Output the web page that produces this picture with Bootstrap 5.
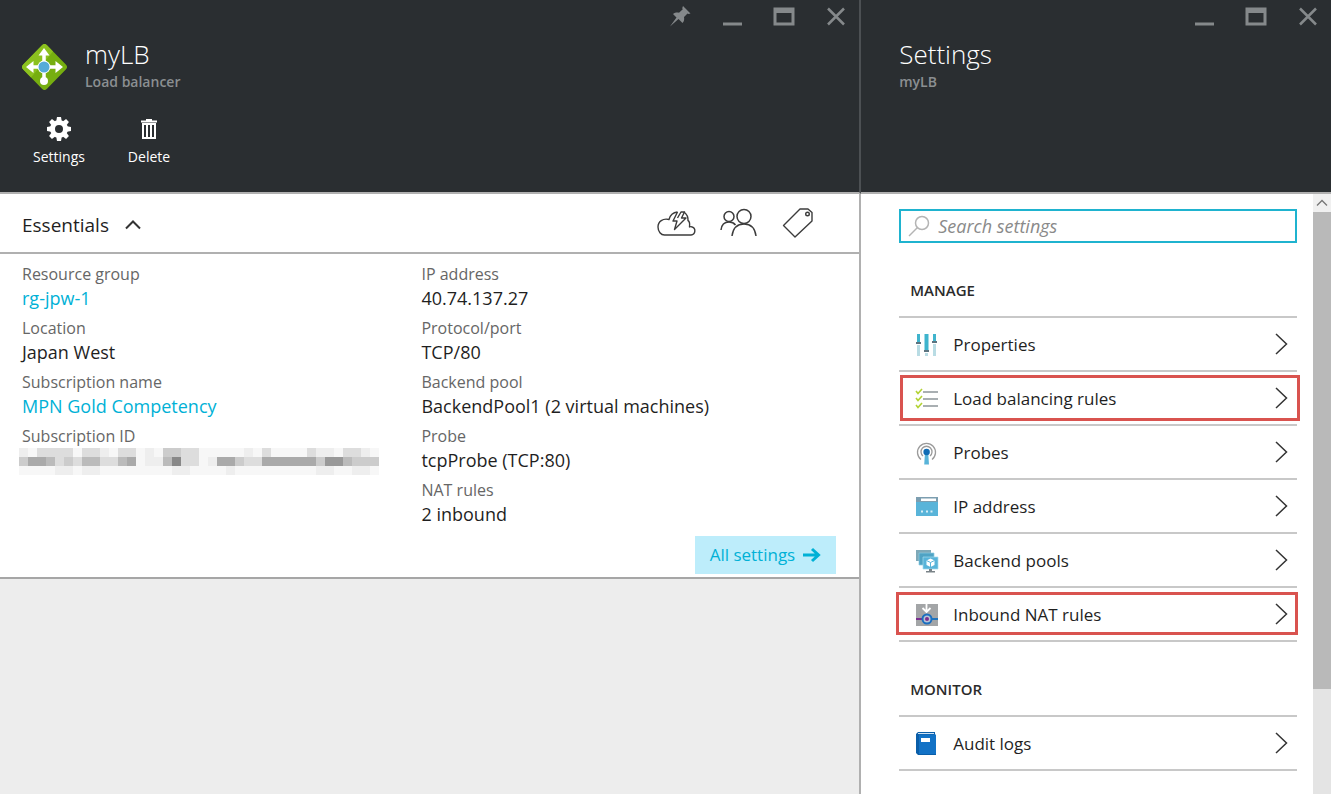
<!DOCTYPE html>
<html lang="en">
<head>
<meta charset="utf-8">
<meta name="viewport" content="width=device-width, initial-scale=1">
<title>myLB - Load balancer</title>
<link href="https://cdn.jsdelivr.net/npm/bootstrap@5.3.0/dist/css/bootstrap.min.css" rel="stylesheet">
<style>
  body { font-family: "Open Sans", "Noto Sans", sans-serif; font-size: 18px; line-height: 24px; color: #1f1f1f; background: #fff; }
  button { font-family: inherit; }
  svg { display: block; flex: none; }
  .portal { display: grid; grid-template-columns: 11fr 6fr; min-height: 100vh; }
  .blade-main { background: #ededed; border-right: 2px solid #b0b0b0; }
  .blade-head { height: 194px; background: #2a2e31; border-bottom: 2px solid #b0b0b0; }
  .blade-main .blade-head { margin-right: -2px; border-right: 2px solid #4c5053; }
  .win-bar { height: 32px; gap: 6px; }
  .win-btn { width: 46px; height: 32px; color: #85898b; }
  .plain-btn { background: none; border: 0; padding: 0; }
  .blade-title { font-size: 26px; line-height: 36px; font-weight: 300; color: #fff; margin: 0; }
  .blade-sub { font-size: 14px; line-height: 20px; font-weight: 600; color: #8b8f91; margin: 0; }
  .title-row { padding: 4px 22px 0; gap: 18px; }
  .title-row svg { margin-bottom: 2px; }
  .title-row-settings { padding-left: 38px; }
  .cmd-row { padding: 24px 14px 0; }
  .cmd { width: 90px; color: #fff; font-size: 14px; line-height: 20px; gap: 5px; }
  .ess-head { height: 60px; padding: 0 45px 0 22px; border-bottom: 2px solid #b0b0b0; background: #fff; }
  .ess-title { font-size: 19px; line-height: 28px; color: #1f1f1f; padding-top: 3px; }
  .ess-body { background: #fff; padding: 8px 22px 3px; border-bottom: 2px solid #a6a6a6; }
  .ess-body dl { margin: 0; }
  .ess-body dt { font-size: 16px; font-weight: 400; color: #666; }
  .ess-body dd { margin: 0 0 6px; }
  .ess-col { flex: 0 0 49%; }
  .ess-body a { color: #00b1d6; text-decoration: none; }
  .masked-id { margin-left: -3px; }
  .all-btn { background: #bdedfb; font-size: 17px; height: 38px; padding: 0 15px; margin: 4px 1px 0 0; gap: 8px; }
  .settings-body { padding: 15px 16px 0 38px; }
  .search-box { height: 34px; border: 2px solid #1fb3cf; padding: 0 7px; gap: 8px; }
  .search-box input { border: 0; outline: 0; background: none; padding: 0; width: 100%; min-width: 0; }
  .search-box input::placeholder { color: #8a8a8a; font-style: italic; opacity: 1; }
  .group-title { font-size: 15px; line-height: 20px; font-weight: 600; color: #2b2b2b; margin: 0; padding: 37px 11px 16px; }
  .set-list { border-top: 2px solid #c8c8c8; }
  .set-list li { position: relative; border-bottom: 2px solid #c8c8c8; }
  .set-list a { height: 52px; padding: 2px 9px 0 16px; font-size: 17px; color: #1f1f1f; text-decoration: none; gap: 14px; }
  .set-list a > svg:last-child { margin-bottom: 3px; }
  .callout { position: absolute; border: 3px solid #d9534f; pointer-events: none; }
  .callout-rules { inset: 3px -3px 3px 1px; }
  .callout-nat { inset: 4px -1px 5px -3px; }
  .scroll-track { width: 18px; background: #e4e4e4; }
  .scroll-up { height: 18px; background: #f0f0f0; }
  .scroll-thumb { height: 79.5%; background: #b9b9b9; }
</style>
</head>
<body>
<svg width="0" height="0" class="position-absolute" aria-hidden="true">
  <symbol id="i-min" viewBox="0 0 24 24"><path d="M3 18.500h19v3H3z" fill="currentColor"/></symbol>
  <symbol id="i-max" viewBox="0 0 24 24"><path fill-rule="evenodd" fill="currentColor" d="M1.500 3.500h21v18h-21zM4.500 9v9.500h15V9z"/></symbol>
  <symbol id="i-close" viewBox="0 0 24 24"><path d="M4 4.500l16 16M20 4.500l-16 16" stroke="currentColor" stroke-width="2.500" fill="none"/></symbol>
  <symbol id="i-next" viewBox="0 0 14 24"><path d="M2 2l10.500 10L2 22" stroke="#333" stroke-width="1.500" fill="none"/></symbol>
</svg>
<div class="portal">
  <main class="blade-main d-flex flex-column">
    <header class="blade-head">
      <div class="win-bar d-flex justify-content-end">
        <button class="plain-btn win-btn d-flex align-items-center justify-content-center" aria-label="Pin">
          <svg width="24" height="24" viewBox="0 0 24 24"><path fill="currentColor" d="M15 2l7.500 7.500-2 .5-1-.5-3.500 3.500c.5 2.500 0 4.500-1.500 6L10.500 15 2 22.500l6.500-9L5 10c2-1.500 4-1.800 6-1.300l3.800-3.500-.6-1z"/></svg>
        </button>
        <button class="plain-btn win-btn d-flex align-items-center justify-content-center" aria-label="Minimize"><svg width="24" height="24"><use href="#i-min"/></svg></button>
        <button class="plain-btn win-btn d-flex align-items-center justify-content-center" aria-label="Maximize"><svg width="24" height="24"><use href="#i-max"/></svg></button>
        <button class="plain-btn win-btn d-flex align-items-center justify-content-center" aria-label="Close"><svg width="24" height="24"><use href="#i-close"/></svg></button>
      </div>
      <div class="title-row d-flex align-items-end">
        <svg width="45" height="46" viewBox="0 0 45 46">
          <path d="M20 1.200a3.500 3.500 0 0 1 5 0L43.800 20.500a3.500 3.500 0 0 1 0 5L25 44.800a3.500 3.500 0 0 1-5 0L1.200 25.500a3.500 3.500 0 0 1 0-5z" fill="#76ae10"/>
          <path d="M20 1.200a3.500 3.500 0 0 1 5 0L31 7.500 9 33.500 1.200 25.500a3.500 3.500 0 0 1 0-5z" fill="#8cc11f"/>
          <path d="M22 8v28M9 23h28" stroke="#fff" stroke-width="3.500"/>
          <path d="M22 4l5.500 7.500h-11zM4 23l7.500-6v12zM41 23l-7.500-6v12z" fill="#fff"/>
          <circle cx="22" cy="37" r="4" fill="#fff"/>
          <circle cx="22" cy="23" r="6.500" fill="#fff"/><circle cx="22" cy="23" r="5.500" fill="#55abd8"/>
        </svg>
        <div>
          <h1 class="blade-title">myLB</h1>
          <p class="blade-sub">Load balancer</p>
        </div>
      </div>
      <div class="cmd-row d-flex">
        <button class="plain-btn cmd d-flex flex-column align-items-center">
          <svg width="26" height="26" viewBox="-13 -13 26 26"><g fill="#fff"><path id="tooth" d="M-2.700-8l.7-4h4l.7 4z"/><use href="#tooth" transform="rotate(45)"/><use href="#tooth" transform="rotate(90)"/><use href="#tooth" transform="rotate(135)"/><use href="#tooth" transform="rotate(180)"/><use href="#tooth" transform="rotate(225)"/><use href="#tooth" transform="rotate(270)"/><use href="#tooth" transform="rotate(315)"/></g><circle r="6.500" fill="none" stroke="#fff" stroke-width="5"/></svg>
          Settings
        </button>
        <button class="plain-btn cmd d-flex flex-column align-items-center">
          <svg width="26" height="26" viewBox="0 0 26 26"><path fill="#fff" d="M10 3h6v1.500h5v2H5v-2h5z"/><path d="M7 8v14h12V8z" fill="none" stroke="#fff" stroke-width="2"/><path d="M11 8v14M15 8v14" stroke="#fff" stroke-width="2"/></svg>
          Delete
        </button>
      </div>
    </header>

    <section>
      <div class="ess-head d-flex align-items-center justify-content-between">
        <button class="plain-btn ess-title d-flex align-items-center gap-3" aria-expanded="true">Essentials
          <svg width="16" height="10" viewBox="0 0 16 10"><path d="M1 8.500l7-7 7 7" fill="none" stroke="#333" stroke-width="2"/></svg>
        </button>
        <div class="d-flex align-items-center gap-4">
          <button class="plain-btn" aria-label="Quick start">
            <svg width="39" height="30" viewBox="0 0 39 30" fill="none" stroke="#3c3c3c" stroke-width="1.400" stroke-linejoin="round"><path d="M7.500 27H34a4.200 4.200 0 0 0 .5-8.300c-.8-.2-1.500 0-2 .3.500-4-.5-6-1.500-6.500.3-4-1.500-6.500-4-8.500M20.500 4c-4.500.5-7.500 3.500-8.500 7.500C6 10 1 13.500 1 19c0 4.500 3 8 6.500 8"/><path d="M20.500 4l-4.500 9h4l-2.500 8.500L29 10h-4.500L27.500 4h-3.500l-3.500 6"/></svg>
          </button>
          <button class="plain-btn" aria-label="Users">
            <svg width="38" height="30" viewBox="0 0 38 30" fill="none" stroke="#3c3c3c" stroke-width="1.500"><circle cx="9" cy="8.500" r="5"/><circle cx="24" cy="8.500" r="7"/><path d="M1 22c.5-5 3.500-8 8-8 3 0 5 1 6.500 3M12 28c1-8 5-12 12-12s11 4 12 12"/></svg>
          </button>
          <button class="plain-btn" aria-label="Tags">
            <svg width="32" height="30" viewBox="0 0 32 30" fill="none" stroke="#3c3c3c" stroke-width="1.400" stroke-linejoin="round"><path d="M18 1h8l4 3.500V13L13 29 1.500 17.500z"/><circle cx="25.500" cy="6" r="1.800"/></svg>
          </button>
        </div>
      </div>
      <div class="ess-body">
        <div class="d-flex">
          <dl class="ess-col">
            <dt>Resource group</dt><dd><a href="#">rg-jpw-1</a></dd>
            <dt>Location</dt><dd>Japan West</dd>
            <dt>Subscription name</dt><dd><a href="#">MPN Gold Competency</a></dd>
            <dt>Subscription ID</dt><dd><svg id="masked" class="masked-id" width="360" height="27" role="img" aria-label="Hidden"></svg></dd>
          </dl>
          <dl>
            <dt>IP address</dt><dd>40.74.137.27</dd>
            <dt>Protocol/port</dt><dd>TCP/80</dd>
            <dt>Backend pool</dt><dd>BackendPool1 (2 virtual machines)</dd>
            <dt>Probe</dt><dd>tcpProbe (TCP:80)</dd>
            <dt>NAT rules</dt><dd>2 inbound</dd>
          </dl>
        </div>
        <div class="d-flex justify-content-end">
          <a href="#" class="all-btn d-flex align-items-center">All settings
            <svg width="18" height="16" viewBox="0 0 18 16"><path d="M0 8h15M9 2l6.500 6L9 14" fill="none" stroke="#00b1d6" stroke-width="3"/></svg>
          </a>
        </div>
      </div>
    </section>
  </main>

  <aside class="d-flex flex-column">
    <header class="blade-head">
      <div class="win-bar d-flex justify-content-end">
        <button class="plain-btn win-btn d-flex align-items-center justify-content-center" aria-label="Minimize"><svg width="24" height="24"><use href="#i-min"/></svg></button>
        <button class="plain-btn win-btn d-flex align-items-center justify-content-center" aria-label="Maximize"><svg width="24" height="24"><use href="#i-max"/></svg></button>
        <button class="plain-btn win-btn d-flex align-items-center justify-content-center" aria-label="Close"><svg width="24" height="24"><use href="#i-close"/></svg></button>
      </div>
      <div class="title-row title-row-settings">
        <h2 class="blade-title">Settings</h2>
        <p class="blade-sub">myLB</p>
      </div>
    </header>
    <div class="d-flex flex-grow-1">
      <div class="settings-body flex-grow-1">
        <label class="search-box d-flex align-items-center">
          <svg width="22" height="24" viewBox="0 0 22 24" fill="none" stroke="#b4b4b4" stroke-width="1.500"><circle cx="14" cy="9" r="6.500"/><path d="M9.500 13.500L1 22"/></svg>
          <input type="text" placeholder="Search settings" aria-label="Search settings">
        </label>
        <h3 class="group-title">MANAGE</h3>
        <ul class="set-list list-unstyled m-0">
          <li><a href="#" class="d-flex align-items-center">
            <svg width="24" height="24" viewBox="0 0 24 24"><path d="M2 1h3v9H2zM9.500 1h4v17h-4zM18 1h3v8h-3z" fill="#3fb4cd"/><path d="M2 12h3v11H2zM10 20h3v3h-3zM18 11h3v12h-3z" fill="#b9dce4"/><path d="M1 9h5v2H1zM9 17h5v2H9zM17 8h5v2h-5z" fill="#5c7480"/></svg>
            <span class="flex-grow-1">Properties</span><svg width="14" height="24"><use href="#i-next"/></svg></a></li>
          <li><a href="#" class="d-flex align-items-center">
            <svg width="24" height="24" viewBox="0 0 24 24" fill="none"><path d="M8 5h15M8 12h15M8 19h15" stroke="#8d9599" stroke-width="1.500"/><path d="M1 4l2 2.500L7 2M1 11l2 2.500L7 9M1 18l2 2.500L7 16" stroke="#b3d335" stroke-width="1.600"/></svg>
            <span class="flex-grow-1">Load balancing rules</span><svg width="14" height="24"><use href="#i-next"/></svg></a>
            <span class="callout callout-rules"></span></li>
          <li><a href="#" class="d-flex align-items-center">
            <svg width="24" height="24" viewBox="0 0 24 24" fill="none"><path d="M6 18.500a9 9 0 1 1 11 0" stroke="#9b9b9b" stroke-width="1.300"/><path d="M8 15a5.500 5.500 0 1 1 7 0" stroke="#9b9b9b" stroke-width="1.300"/><path d="M10 12h3.200l.8 11.500H9.200z" fill="#59b4d9"/><circle cx="11.600" cy="11" r="3.200" fill="#0f6cb5"/></svg>
            <span class="flex-grow-1">Probes</span><svg width="14" height="24"><use href="#i-next"/></svg></a></li>
          <li><a href="#" class="d-flex align-items-center">
            <svg width="24" height="24" viewBox="0 0 24 24"><path d="M1 2h22v19H1z" fill="#59b4d9"/><path d="M1 2h22v5H1z" fill="#7c9eb0"/><path d="M6 3.500h15v2.500H6z" fill="#fff"/><path d="M6 15.500h2v2H6zM11 15.500h2v2h-2zM15.500 15.500h2v2h-2z" fill="#d8eef7"/></svg>
            <span class="flex-grow-1">IP address</span><svg width="14" height="24"><use href="#i-next"/></svg></a></li>
          <li><a href="#" class="d-flex align-items-center">
            <svg width="24" height="24" viewBox="0 0 24 24"><path d="M1 1h15v11H1z" fill="#7fa9b8"/><path d="M4 4h15v12H4z" fill="#4fa3c4" stroke="#8ccbe2" stroke-width=".7"/><path d="M8 8h15v12H8z" fill="#59b4d9" stroke="#a5dbee" stroke-width=".7"/><path d="M14 20h3v2h3v1.500h-9V22h3z" fill="#7a8388"/><path d="M15.500 9.500l4 2v4.500l-4 2-4-2v-4.500z" fill="#fff"/><path d="M11.500 11.500l4 2 4-2M15.500 13.500V18" stroke="#59b4d9" fill="none"/></svg>
            <span class="flex-grow-1">Backend pools</span><svg width="14" height="24"><use href="#i-next"/></svg></a></li>
          <li><a href="#" class="d-flex align-items-center">
            <svg width="24" height="24" viewBox="0 0 24 24" fill="none"><path d="M1 1h22v22H1z" fill="#a3a5a7"/><path d="M11.500 1v7M7.500 5l4 4 4-4" stroke="#fff" stroke-width="1.800"/><path d="M1 16h9" stroke="#7b2d8e" stroke-width="2"/><path d="M13 16h10" stroke="#2174bd" stroke-width="2"/><circle cx="12" cy="16" r="4.500" stroke="#1b6fc0" stroke-width="2" fill="#b9c4d6"/><circle cx="12" cy="16" r="2" fill="#7b2d8e"/></svg>
            <span class="flex-grow-1">Inbound NAT rules</span><svg width="14" height="24"><use href="#i-next"/></svg></a>
            <span class="callout callout-nat"></span></li>
        </ul>
        <h3 class="group-title">MONITOR</h3>
        <ul class="set-list list-unstyled m-0">
          <li><a href="#" class="d-flex align-items-center">
            <svg width="24" height="24" viewBox="0 0 24 24"><path d="M3 0h17v3h1v20H3l-2-2V2z" fill="#0a5ea8"/><path d="M4 2.500h17V22H4z" fill="#1272c6"/><path d="M3 1h16v1H3z" fill="#cfe2f3"/><path d="M6 6h9v4H6z" fill="#fff"/></svg>
            <span class="flex-grow-1">Audit logs</span><svg width="14" height="24"><use href="#i-next"/></svg></a></li>
        </ul>
      </div>
      <div class="scroll-track" aria-hidden="true">
        <div class="scroll-up d-flex align-items-center justify-content-center"><svg width="12" height="8" viewBox="0 0 12 8"><path d="M1 6.500l5-5 5 5" fill="none" stroke="#777" stroke-width="1.300"/></svg></div>
        <div class="scroll-thumb"></div>
      </div>
    </div>
  </aside>
</div>
<script src="https://cdn.jsdelivr.net/npm/bootstrap@5.3.0/dist/js/bootstrap.bundle.min.js"></script>
<script>
  // One hex digit per mosaic cell, each the grey level of a 9px square.
  var rows = ["efddddfddefddfefccddfffffefdffffdeefddef", "caabdcdbbddbafeeb8ddfeaacddaaaaaac99bccc", "ffffeefeeffffffffeeffffefffffffffeeffeef"];
  var out = "";
  rows.forEach(function (row, y) {
    row.split("").forEach(function (c, x) {
      var grey = c === "f" ? "#f7f7f7" : "#" + c + c + c;
      out += '<rect x="' + x * 9 + '" y="' + y * 9 + '" width="9" height="9" fill="' + grey + '"/>';
    });
  });
  document.getElementById("masked").innerHTML = out;
</script>
</body>
</html>
